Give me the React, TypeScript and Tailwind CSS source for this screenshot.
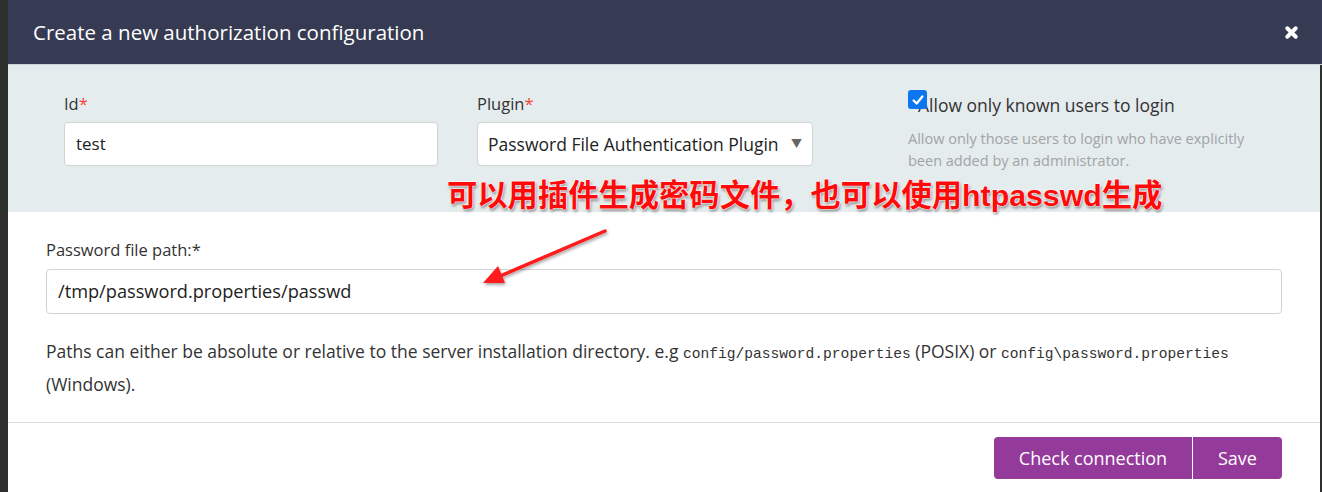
import { X } from 'lucide-react';

const sans = "font-['Open_Sans','Noto_Sans_CJK_SC',sans-serif]";

export default function App() {
  return (
    <div className={`relative w-[1322px] h-[492px] bg-[#2e302e] pl-[8px] overflow-hidden ${sans}`}>
      <div className="flex h-full flex-col">
        {/* header */}
        <div className="flex h-[65px] items-center justify-between bg-[#363a52] pl-[25px] pr-[22px] border-b border-[#c9d2d6]">
          <h1 className="text-[20.5px] text-white leading-none">Create a new authorization configuration</h1>
          <X className="h-[17px] w-[17px] text-white" strokeWidth={5.5} />
        </div>

        <div className="mr-[2px] flex flex-1 flex-col bg-white">
          {/* plugin settings */}
          <div className="flex h-[147px] bg-[#e5ecee] pl-[56px] pt-[28px]">
            <div className="w-[413px]">
              <label className="block text-[16.5px] leading-[22px] text-[#333]">
                Id<span className="text-[#f44336]">*</span>
              </label>
              <div className="mt-[7px] flex h-[44px] w-[374px] items-center rounded-[4px] border border-[#d3d3d3] bg-white px-[11px] text-[17px] text-[#222]">
                test
              </div>
            </div>
            <div className="w-[431px]">
              <label className="block text-[16.5px] leading-[22px] text-[#333]">
                Plugin<span className="text-[#f44336]">*</span>
              </label>
              <div className="mt-[7px] flex h-[44px] w-[336px] items-center justify-between rounded-[4px] border border-[#d3d3d3] bg-white pl-[10px] pr-[10px] text-[17.5px] text-[#222]">
                <span className="whitespace-nowrap">Password File Authentication Plugin</span>
                <span className="text-[11px] text-[#666]">▼</span>
              </div>
            </div>
            <div className="w-[380px]">
              <div className="relative -mt-[1px] flex items-center">
                <div className="absolute left-0 top-[-2px] flex h-[19px] w-[19px] items-center justify-center rounded-[3px] bg-[#0b76f0]">
                  <svg viewBox="0 0 16 16" className="h-[14px] w-[14px]">
                    <path d="M3 8.5 L6.5 12 L13 4" fill="none" stroke="white" strokeWidth="2.6" strokeLinecap="round" strokeLinejoin="round" />
                  </svg>
                </div>
                <span className="pl-[10px] text-[17.5px] leading-[26px] text-[#333]">Allow only known users to login</span>
              </div>
              <p className="mt-[10px] w-[360px] text-[14.5px] leading-[22px] text-[#a0a4a6]">
                Allow only those users to login who have explicitly been added by an administrator.
              </p>
            </div>
          </div>

          {/* password file */}
          <div className="px-[38px] pt-[27px] h-[211px] border-b border-[#dddddd]">
            <label className="block text-[16.5px] leading-[22px] text-[#333]">Password file path:*</label>
            <div className="mt-[8px] flex h-[45px] w-[1236px] items-center rounded-[4px] border border-[#d3d3d3] bg-white px-[11px] text-[18.2px] text-[#222]">
              /tmp/password.properties/passwd
            </div>
            <p className="mt-[22px] w-[1236px] text-[17.5px] leading-[30px] text-[#333]">
              Paths can either be absolute or relative to the server installation directory. e.g{' '}
              <code className="font-['Liberation_Mono',monospace] text-[14.6px]">config/password.properties</code> (POSIX) or{' '}
              <code className="font-['Liberation_Mono',monospace] text-[14.6px]">config\password.properties</code> (Windows).
            </p>
          </div>

          {/* footer */}
          <div className="flex flex-1 justify-end pr-[38px] pt-[14px]">
            <div className="flex h-[42px]">
              <button className="h-full w-[198px] rounded-l-[4px] bg-[#943a9a] text-[18px] text-white">Check connection</button>
              <button className="ml-[1px] h-full w-[89px] rounded-r-[4px] bg-[#943a9a] text-[18px] text-white">Save</button>
            </div>
          </div>
        </div>
      </div>

      {/* annotation */}
      <div className="absolute left-[447px] top-[173px] whitespace-nowrap font-['Noto_Sans_CJK_SC',sans-serif] text-[30.3px] font-bold leading-[40px] text-[#ff0a0a] [text-shadow:0_0_2px_#fff,0_0_2px_#fff,0_0_1px_#fff,1px_2px_3px_#777]">
        可以用插件生成密码文件，也可以使用<span className="font-['Liberation_Sans',sans-serif]">htpasswd</span>生成
      </div>
      <svg className="absolute left-0 top-0 pointer-events-none" width="1322" height="492">
        <defs>
          <filter id="sh" x="-20%" y="-20%" width="140%" height="140%">
            <feDropShadow dx="1" dy="2" stdDeviation="1.5" floodColor="#000" floodOpacity="0.35" />
          </filter>
        </defs>
        <g filter="url(#sh)">
          <line x1="605" y1="231" x2="498" y2="277" stroke="#ff1a1a" strokeWidth="3.5" strokeLinecap="round" />
          <polygon points="483,283 498,266 505,283" fill="#ff1a1a" />
        </g>
      </svg>
    </div>
  );
}
